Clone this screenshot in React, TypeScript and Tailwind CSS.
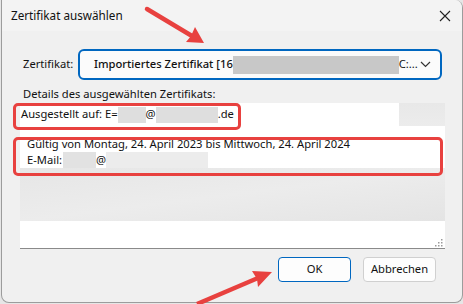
import React from 'react';

const font = { fontFamily: '"Noto Sans", "Open Sans", sans-serif' };

const Blur: React.FC<{ w: string; tone?: string }> = ({ w, tone = 'bg-[#dedede]' }) => (
  <span className={`inline-block h-[16px] align-middle ${w} ${tone}`} />
);

const Arrows: React.FC = () => (
  <svg className="absolute inset-0 pointer-events-none" width="463" height="304" viewBox="0 0 463 304">
    <line x1="147" y1="9" x2="192" y2="36" stroke="#e8413f" strokeWidth="4.5" strokeLinecap="round" />
    <polygon points="204,43 186,42 191,36 195,27" fill="#e8413f" />
    <line x1="197" y1="304" x2="258" y2="278" stroke="#e8413f" strokeWidth="4.5" />
    <polygon points="272,272 258,287 257,279 252,271" fill="#e8413f" />
  </svg>
);

export default function App() {
  return (
    <div className="relative w-[463px] h-[304px] bg-[#e6e6e6] text-[11.2px] text-[#111] overflow-hidden" style={font}>
      <div className="w-[462px] h-[303px] ml-[1px] flex flex-col bg-[#f0f0f0] border border-t-0 border-[#9c9c9c] rounded-tr-lg rounded-b-lg overflow-hidden">
        {/* title bar */}
        <div className="h-[31px] flex items-center justify-between bg-[#f3f3f3] pl-[9px] pr-[10px]">
          <span className="text-[11.7px]">Zertifikat auswählen</span>
          <svg width="12" height="12" viewBox="0 0 12 12" className="mr-[1px]">
            <path d="M1 1 L11 11 M11 1 L1 11" stroke="#222" strokeWidth="1.1" />
          </svg>
        </div>

        <div className="flex-1 flex flex-col pl-[17px] pr-[18px]">
          {/* certificate select */}
          <div className="flex items-center mt-[18px] h-[31px]">
            <span className="ml-[4px] w-[55px] shrink-0">Zertifikat:</span>
            <div className="w-[364px] min-w-0 h-[31px] flex items-center border-2 border-[#0067c0] rounded-[6px] bg-[#fbfbfb] pl-[14px] pr-[9px] overflow-hidden">
              <span className="font-medium whitespace-nowrap">Importiertes Zertifikat [16</span>
              <span className="inline-block h-[18px] w-[166px] shrink-0 bg-[#c8c8c8]" />
              <span className="whitespace-nowrap">C:...</span>
              <svg width="11" height="7" viewBox="0 0 11 7" className="ml-auto shrink-0">
                <path d="M1 1 L5.5 5.5 L10 1" stroke="#333" strokeWidth="1.2" fill="none" />
              </svg>
            </div>
          </div>

          <div className="mt-[6px] ml-[4px] h-[16px] leading-[16px]">Details des ausgewählten Zertifikats:</div>

          {/* details box */}
          <div className="mt-[1px] ml-[1px] w-[425px] h-[146px] flex flex-col bg-white border-b border-[#8a8a8a]">
            <div className="flex h-[23px]">
              <div className="w-[379px] bg-white flex items-center pl-[1px] whitespace-nowrap">
                Ausgestellt auf: E=<Blur w="w-[28px]" />@<Blur w="w-[62px]" />.de
              </div>
              <div className="flex-1 bg-gradient-to-b from-[#e8e8e8] to-[#ececec]" />
            </div>
            <div className="h-[10px]" />
            <div className="pl-[7px] leading-[16px] whitespace-nowrap">
              Gültig von Montag, 24. April 2023 bis Mittwoch, 24. April 2024
            </div>
            <div className="pl-[7px] leading-[16px] whitespace-nowrap flex items-center">
              E-Mail:<Blur w="w-[33px] ml-[1px]" tone="bg-[#e2e2e2]" />@<Blur w="w-[102px]" tone="bg-[#ececec]" />
            </div>
            <div className="h-[53px] bg-gradient-to-br from-[#e6e6e6] via-[#ececec] to-[#e4e4e4]" />
            <div className="flex-1 flex items-end justify-end pr-[2px] pb-[1px]">
              <svg width="8" height="8" viewBox="0 0 8 8">
                <rect x="6" y="0" width="1.5" height="1.5" fill="#9a9a9a" />
                <rect x="3" y="3" width="1.5" height="1.5" fill="#9a9a9a" />
                <rect x="6" y="3" width="1.5" height="1.5" fill="#9a9a9a" />
                <rect x="0" y="6" width="1.5" height="1.5" fill="#9a9a9a" />
                <rect x="3" y="6" width="1.5" height="1.5" fill="#9a9a9a" />
                <rect x="6" y="6" width="1.5" height="1.5" fill="#9a9a9a" />
              </svg>
            </div>
          </div>

          {/* buttons */}
          <div className="flex justify-end gap-[12px] mt-[8px] pr-[8px]">
            <button className="w-[73px] h-[25px] rounded-[4px] border border-[#0067c0] bg-[#fdfdfd]">OK</button>
            <button className="w-[73px] h-[25px] rounded-[4px] border border-[#d0d0d0] bg-[#fdfdfd]">Abbrechen</button>
          </div>
        </div>
      </div>

      {/* annotations */}
      <div className="absolute left-[13px] top-[103px] w-[228px] h-[27px] border-[3.5px] border-[#e8413f] rounded-[5px]" />
      <div className="absolute left-[13px] top-[137px] w-[430px] h-[39px] border-[3.5px] border-[#e8413f] rounded-[5px]" />
      <Arrows />
    </div>
  );
}
